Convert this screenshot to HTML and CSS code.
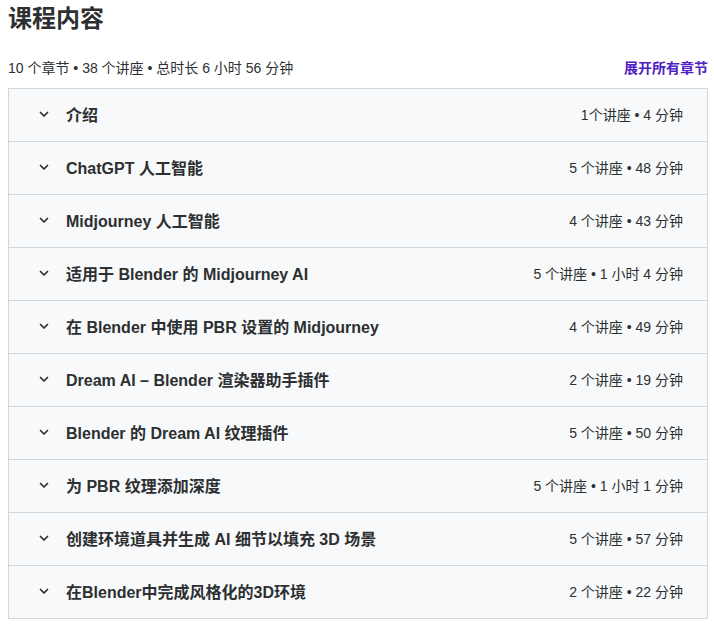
FILE: index.html
```html
<!DOCTYPE html>
<html lang="zh">
<head>
<meta charset="utf-8">
<link rel="stylesheet" href="styles.css">
</head>
<body>
<div class="page">
  <h2 class="title">课程内容</h2>
  <div class="summary">
    <span class="stats">10 个章节 • 38 个讲座 • 总时长 6 小时 56 分钟</span>
    <a class="expand">展开所有章节</a>
  </div>
  <div class="sections">
    <div class="row"><span class="chev"><svg viewBox="0 0 12 12"><path d="M2.5 4.5 L6 8 L9.5 4.5" /></svg></span><span class="name">介绍</span><span class="meta">1个讲座 • 4 分钟</span></div>
    <div class="row"><span class="chev"><svg viewBox="0 0 12 12"><path d="M2.5 4.5 L6 8 L9.5 4.5" /></svg></span><span class="name">ChatGPT 人工智能</span><span class="meta">5 个讲座 • 48 分钟</span></div>
    <div class="row"><span class="chev"><svg viewBox="0 0 12 12"><path d="M2.5 4.5 L6 8 L9.5 4.5" /></svg></span><span class="name">Midjourney 人工智能</span><span class="meta">4 个讲座 • 43 分钟</span></div>
    <div class="row"><span class="chev"><svg viewBox="0 0 12 12"><path d="M2.5 4.5 L6 8 L9.5 4.5" /></svg></span><span class="name">适用于 Blender 的 Midjourney AI</span><span class="meta">5 个讲座 • 1 小时 4 分钟</span></div>
    <div class="row"><span class="chev"><svg viewBox="0 0 12 12"><path d="M2.5 4.5 L6 8 L9.5 4.5" /></svg></span><span class="name">在 Blender 中使用 PBR 设置的 Midjourney</span><span class="meta">4 个讲座 • 49 分钟</span></div>
    <div class="row"><span class="chev"><svg viewBox="0 0 12 12"><path d="M2.5 4.5 L6 8 L9.5 4.5" /></svg></span><span class="name">Dream AI – Blender 渲染器助手插件</span><span class="meta">2 个讲座 • 19 分钟</span></div>
    <div class="row"><span class="chev"><svg viewBox="0 0 12 12"><path d="M2.5 4.5 L6 8 L9.5 4.5" /></svg></span><span class="name">Blender 的 Dream AI 纹理插件</span><span class="meta">5 个讲座 • 50 分钟</span></div>
    <div class="row"><span class="chev"><svg viewBox="0 0 12 12"><path d="M2.5 4.5 L6 8 L9.5 4.5" /></svg></span><span class="name">为 PBR 纹理添加深度</span><span class="meta">5 个讲座 • 1 小时 1 分钟</span></div>
    <div class="row"><span class="chev"><svg viewBox="0 0 12 12"><path d="M2.5 4.5 L6 8 L9.5 4.5" /></svg></span><span class="name">创建环境道具并生成 AI 细节以填充 3D 场景</span><span class="meta">5 个讲座 • 57 分钟</span></div>
    <div class="row"><span class="chev"><svg viewBox="0 0 12 12"><path d="M2.5 4.5 L6 8 L9.5 4.5" /></svg></span><span class="name">在Blender中完成风格化的3D环境</span><span class="meta">2 个讲座 • 22 分钟</span></div>
  </div>
</div>
</body>
</html>
```

FILE: styles.css
```css
* { box-sizing: border-box; }
html, body { margin: 0; padding: 0; background: #fff; }
body {
  font-family: "Liberation Sans", "Noto Sans CJK SC", sans-serif;
  color: #2d2f31;
}
.page {
  padding: 0 6px 0 8px;
}
.title {
  margin: 0;
  padding-top: 0;
  font-size: 24px;
  line-height: 34px;
  font-weight: 700;
  font-family: "Noto Sans CJK SC", sans-serif;
}
.summary {
  display: flex;
  justify-content: space-between;
  align-items: center;
  margin-top: 22px;
  height: 22px;
  font-size: 14px;
}
.stats { color: #2d2f31; }
.expand {
  color: #5022c3;
  font-weight: 700;
  font-size: 14px;
}
.sections {
  margin-top: 10px;
  border: 1px solid #d1d7dc;
  border-bottom: none;
}
.row {
  display: flex;
  align-items: center;
  height: 53px;
  background: #f7f9fa;
  border-bottom: 1px solid #d1d7dc;
  padding: 0 24px 2px 29px;
}
.chev {
  display: flex;
  width: 12px;
  height: 12px;
  margin-right: 16px;
}
.chev svg {
  width: 12px;
  height: 12px;
  fill: none;
  stroke: #2d2f31;
  stroke-width: 1.7;
  stroke-linecap: round;
  stroke-linejoin: round;
}
.name {
  flex: 1;
  font-size: 16px;
  font-weight: 700;
}
.meta {
  font-size: 14px;
}
```
